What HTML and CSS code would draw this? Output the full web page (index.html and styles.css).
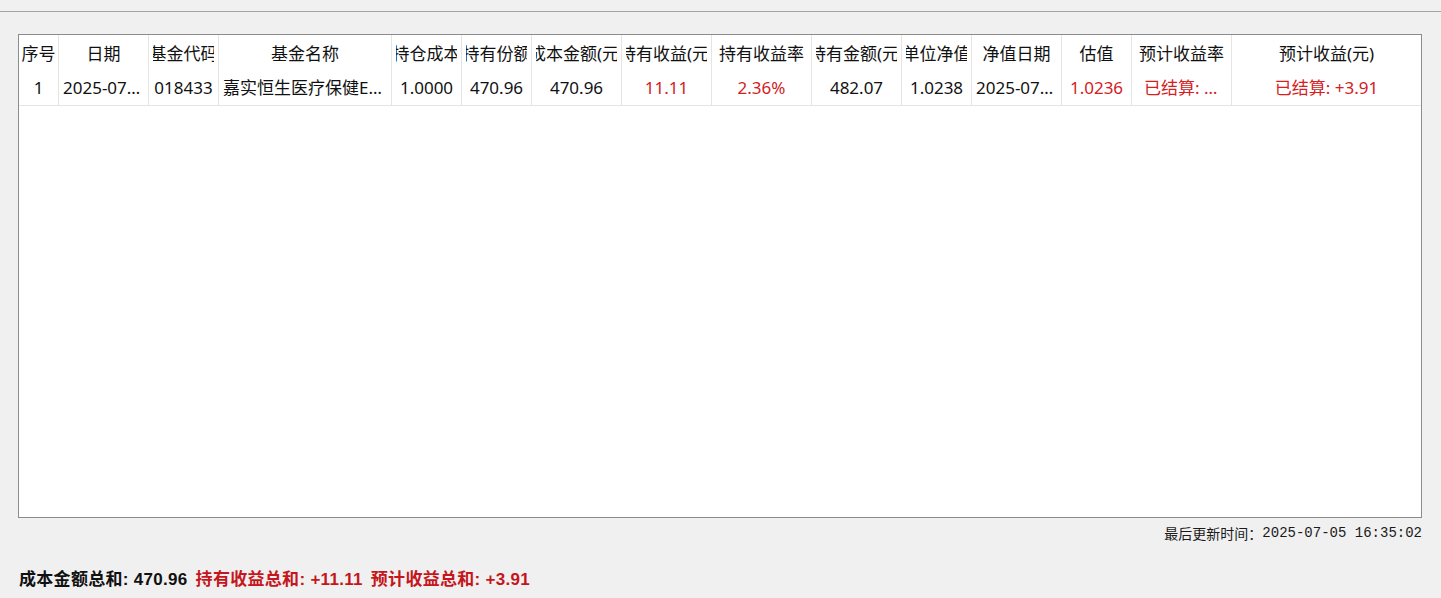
FILE: index.html
```html
<!DOCTYPE html>
<html lang="zh-CN">
<head>
<meta charset="utf-8">
<title>基金持仓</title>
<link rel="stylesheet" href="styles.css">
</head>
<body>
<div class="topbar"></div>
<div class="main">
  <div class="table-box">
    <div class="grid">
      <div class="th narrow"><span>序号</span></div>
      <div class="th"><span>日期</span></div>
      <div class="th"><span>基金代码</span></div>
      <div class="th"><span>基金名称</span></div>
      <div class="th"><span>持仓成本</span></div>
      <div class="th"><span>持有份额</span></div>
      <div class="th"><span>成本金额(元)</span></div>
      <div class="th"><span>持有收益(元)</span></div>
      <div class="th"><span>持有收益率</span></div>
      <div class="th"><span>持有金额(元)</span></div>
      <div class="th"><span>单位净值</span></div>
      <div class="th"><span>净值日期</span></div>
      <div class="th"><span>估值</span></div>
      <div class="th"><span>预计收益率</span></div>
      <div class="th last"><span>预计收益(元)</span></div>

      <div class="td">1</div>
      <div class="td">2025-07-04</div>
      <div class="td">018433</div>
      <div class="td">嘉实恒生医疗保健ETF发起联接C</div>
      <div class="td">1.0000</div>
      <div class="td">470.96</div>
      <div class="td">470.96</div>
      <div class="td red">11.11</div>
      <div class="td red">2.36%</div>
      <div class="td">482.07</div>
      <div class="td">1.0238</div>
      <div class="td">2025-07-04</div>
      <div class="td red">1.0236</div>
      <div class="td red wide-pad">已结算: +0.82%</div>
      <div class="td red last">已结算: +3.91</div>
    </div>
  </div>
  <div class="update">最后更新时间：<span class="mono">2025-07-05 16:35:02</span></div>
  <div class="summary">
    <span class="sum">成本金额总和: 470.96</span>
    <span class="sum red2">持有收益总和: +11.11</span>
    <span class="sum red2">预计收益总和: +3.91</span>
  </div>
</div>
</body>
</html>
```
FILE: styles.css
```css
html, body {
  margin: 0;
  padding: 0;
}
body {
  width: 1441px;
  height: 598px;
  overflow: hidden;
  background: #f0f0f0;
  font-family: "Noto Sans", "Noto Sans CJK SC", sans-serif;
  color: #111;
}
.topbar {
  height: 11px;
  border-bottom: 1px solid #a3a3a3;
}
.main {
  padding: 22px 19px 0 18px;
}
.table-box {
  box-sizing: border-box;
  height: 484px;
  border: 1px solid #8c8c8c;
  background: #fff;
}
.grid {
  display: grid;
  grid-template-columns: 40px 90px 70px 173px 70px 70px 90px 90px 100px 90px 70px 90px 70px 100px 1fr;
  grid-template-rows: 35px 36px;
  font-size: 17px;
}
.th, .td {
  box-sizing: border-box;
  border-right: 1px solid #e4e4e4;
}
.th.last, .td.last {
  border-right: none;
}
.th {
  display: flex;
  align-items: center;
  padding: 0 4px;
  color: #111;
}
.th.narrow {
  padding: 0 2px;
}
.th span {
  flex: 1;
  min-width: 0;
  overflow: hidden;
  display: flex;
  justify-content: center;
  white-space: nowrap;
}
.td {
  border-bottom: 1px solid #e4e4e4;
  padding: 0 4px;
  line-height: 35px;
  text-align: center;
  white-space: nowrap;
  overflow: hidden;
  text-overflow: ellipsis;
  color: #111;
}
.td.wide-pad {
  padding: 0 12px;
}
.td.red {
  color: #d3211f;
}
.update {
  height: 30px;
  display: flex;
  justify-content: flex-end;
  align-items: center;
  font-family: "Noto Sans CJK SC", sans-serif;
  font-size: 14px;
  color: #1a1a1a;
}
.mono {
  font-family: "Liberation Mono", monospace;
  font-size: 14px;
}
.summary {
  margin-top: 17px;
  height: 24px;
  display: flex;
  align-items: center;
  gap: 8px;
  padding-left: 1px;
  font-family: "Liberation Sans", "Noto Sans CJK SC", sans-serif;
  font-weight: bold;
  font-size: 17px;
  letter-spacing: 0.3px;
  color: #111;
}
.sum.red2 {
  color: #c4161c;
}
```
